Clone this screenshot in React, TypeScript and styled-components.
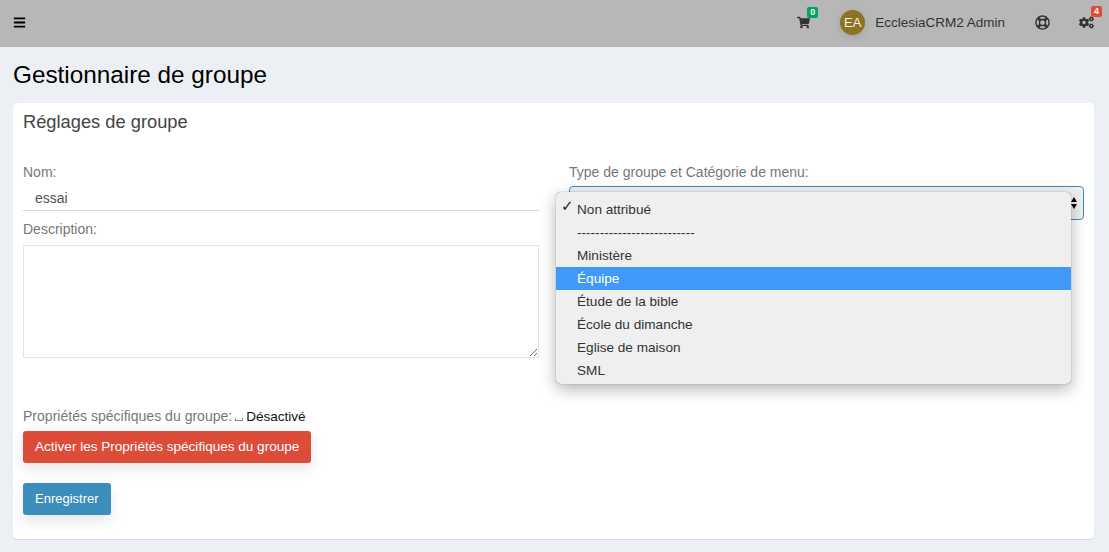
import React from "react";
import styled, { createGlobalStyle } from "styled-components";
import { FaBars, FaCogs, FaRegLifeRing, FaShoppingCart } from "react-icons/fa";

const groupTypes = [
    "Non attribué",
    "--------------------------",
    "Ministère",
    "Équipe",
    "Étude de la bible",
    "École du dimanche",
    "Eglise de maison",
    "SML",
];

export default function App() {
    return (
        <Page>
            <GlobalStyle />
            <TopBar>
                <IconButton>
                    <FaBars size={13} />
                </IconButton>
                <TopRight>
                    <BadgeHolder>
                        <FaShoppingCart size={13} />
                        <Badge $color="#00a65a">0</Badge>
                    </BadgeHolder>
                    <UserBlock>
                        <Avatar>EA</Avatar>
                        <UserName>EcclesiaCRM2 Admin</UserName>
                    </UserBlock>
                    <LifeRingIcon>
                        <FaRegLifeRing size={15} />
                    </LifeRingIcon>
                    <BadgeHolder>
                        <FaCogs size={15} />
                        <Badge $color="#dd4b39">4</Badge>
                    </BadgeHolder>
                </TopRight>
            </TopBar>
            <Content>
                <Title>Gestionnaire de groupe</Title>
                <Card>
                    <CardTitle>Réglages de groupe</CardTitle>
                    <Columns>
                        <Column>
                            <Label>Nom:</Label>
                            <NameInput>essai</NameInput>
                            <DescriptionLabel>Description:</DescriptionLabel>
                            <TextArea defaultValue="" />
                        </Column>
                        <Column>
                            <Label>Type de groupe et Catégorie de menu:</Label>
                            <SelectWrap>
                                <SelectBox>
                                    <SelectArrows viewBox="0 0 6 12">
                                        <path d="M3 0 L6 5 H0 Z M3 12 L6 7 H0 Z" fill="#000" />
                                    </SelectArrows>
                                </SelectBox>
                                <Menu>
                                    {groupTypes.map((name, i) => (
                                        <MenuItem key={name} $active={i === 3}>
                                            {i === 0 && <Check>✓</Check>}
                                            {name}
                                        </MenuItem>
                                    ))}
                                </Menu>
                            </SelectWrap>
                        </Column>
                    </Columns>
                    <PropsRow>
                        <PropsLabel>Propriétés spécifiques du groupe:</PropsLabel>
                        <Blank />
                        <PropsState>Désactivé</PropsState>
                    </PropsRow>
                    <DangerButton>Activer les Propriétés spécifiques du groupe</DangerButton>
                    <SaveButton>Enregistrer</SaveButton>
                </Card>
            </Content>
        </Page>
    );
}

const GlobalStyle = createGlobalStyle`
    html, body {
        margin: 0;
        padding: 0;
        height: 552px;
        overflow: hidden;
        background: #ecf0f5;
        font-family: "Liberation Sans", Arial, sans-serif;
    }
`;

const Page = styled.div`
    width: 1109px;
    height: 552px;
    overflow: hidden;
`;

const TopBar = styled.div`
    box-sizing: border-box;
    height: 47px;
    background: #b7b7b7;
    display: flex;
    align-items: center;
    justify-content: space-between;
    padding: 0 15px 3px 13px;
    color: #222;
`;

const IconButton = styled.div`
    display: flex;
    color: #000;
`;

const TopRight = styled.div`
    display: flex;
    align-items: center;
`;

const BadgeHolder = styled.div`
    position: relative;
    display: flex;
    color: #333;
`;

const Badge = styled.span<{ $color: string }>`
    position: absolute;
    top: -9px;
    right: -8px;
    min-width: 11px;
    height: 11px;
    border-radius: 2px;
    background: ${(p) => p.$color};
    color: #fff;
    font-size: 9px;
    font-weight: bold;
    line-height: 11px;
    text-align: center;
`;

const UserBlock = styled.div`
    display: flex;
    align-items: center;
    margin-left: 30px;
`;

const Avatar = styled.div`
    width: 25px;
    height: 25px;
    border-radius: 50%;
    background: #8b7321;
    color: #f4f1e4;
    font-size: 13px;
    line-height: 25px;
    text-align: center;
    box-shadow: 0 2px 6px rgba(0, 0, 0, 0.12);
`;

const UserName = styled.span`
    margin-left: 10px;
    font-size: 13.5px;
    color: #333;
`;

const LifeRingIcon = styled.div`
    display: flex;
    margin: 0 29px 0 30px;
    color: #333;
`;

const Content = styled.div`
    padding: 0 15px 0 13px;
`;

const Title = styled.h1`
    margin: 0;
    padding-top: 14px;
    height: 42px;
    font-size: 24.3px;
    font-weight: 400;
    line-height: 28px;
    color: #000;
`;

const Card = styled.div`
    box-sizing: border-box;
    height: 437px;
    padding: 10px 10px 0;
    background: #fff;
    border-radius: 5px;
    border-bottom: 1px solid #d2d6de;
`;

const CardTitle = styled.h3`
    margin: 0;
    height: 39px;
    font-size: 18.3px;
    font-weight: 400;
    line-height: 17px;
    color: #444;
`;

const Columns = styled.div`
    display: grid;
    grid-template-columns: 516px 515px;
    column-gap: 30px;
    height: 256px;
    padding-top: 12px;
    box-sizing: border-box;
`;

const Column = styled.div`
    display: flex;
    flex-direction: column;
    min-width: 0;
`;

const Label = styled.label`
    height: 22px;
    font-size: 14px;
    line-height: 17px;
    color: #777;
`;

const NameInput = styled.div`
    box-sizing: border-box;
    height: 25px;
    padding: 0 12px;
    font-size: 14px;
    line-height: 25px;
    color: #555;
    border-bottom: 1px solid #d2d6de;
`;

const DescriptionLabel = styled(Label)`
    margin-top: 10px;
    height: 24px;
`;

const TextArea = styled.textarea`
    box-sizing: border-box;
    display: block;
    width: 516px;
    height: 113px;
    margin: 0;
    border: 1px solid #e4e4e4;
    outline: none;
    resize: vertical;
`;

const SelectWrap = styled.div`
    position: relative;
`;

const SelectBox = styled.div`
    box-sizing: border-box;
    display: flex;
    align-items: center;
    justify-content: flex-end;
    width: 515px;
    height: 34px;
    padding-right: 6px;
    border: 1px solid #3c8dbc;
    border-radius: 4px;
    background: #f0f0f0;
`;

const SelectArrows = styled.svg`
    width: 6px;
    height: 12px;
`;

const Menu = styled.div`
    position: absolute;
    top: 6px;
    left: -13px;
    box-sizing: border-box;
    width: 515px;
    height: 192px;
    padding: 6px 0;
    background: #efefef;
    border-radius: 5px;
    box-shadow: 0 0 1px rgba(0, 0, 0, 0.6), 0 5px 16px rgba(0, 0, 0, 0.3);
`;

const MenuItem = styled.div<{ $active?: boolean }>`
    position: relative;
    height: 23px;
    padding-left: 21px;
    font-size: 13.6px;
    line-height: 23px;
    color: ${(p) => (p.$active ? "#fff" : "#333")};
    background: ${(p) => (p.$active ? "#3f99fb" : "transparent")};
`;

const Check = styled.span`
    position: absolute;
    left: 5px;
    top: -3px;
    font-family: "DejaVu Sans", sans-serif;
    font-size: 15px;
    font-weight: bold;
    color: #222;
`;

const PropsRow = styled.div`
    display: flex;
    align-items: baseline;
    height: 23px;
    font-size: 14.05px;
    line-height: 17px;
`;

const PropsLabel = styled.span`
    color: #777;
`;

const Blank = styled.span`
    display: inline-block;
    width: 6px;
    height: 2px;
    margin: 0 3px 0 3px;
    border: 1px solid #888;
    border-top: 0;
`;

const PropsState = styled.span`
    font-size: 13.5px;
    color: #111;
`;

const Button = styled.div`
    box-sizing: border-box;
    height: 32px;
    padding: 0 12px;
    width: fit-content;
    font-size: 13.55px;
    line-height: 32px;
    color: #fff;
    border-radius: 3px;
    box-shadow: 0 6px 14px rgba(0, 0, 0, 0.1);
`;

const DangerButton = styled(Button)`
    background: #dd4b39;
`;

const SaveButton = styled(Button)`
    margin-top: 20px;
    font-size: 13px;
    background: #3c8dbc;
`;
